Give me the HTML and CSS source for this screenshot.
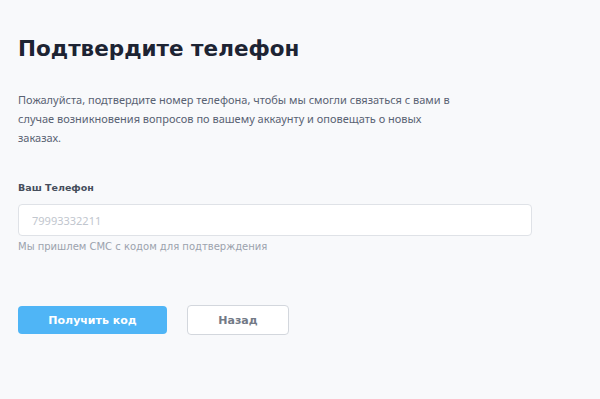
FILE: index.html
```html
<!DOCTYPE html>
<html lang="ru">
<head>
<meta charset="utf-8">
<link rel="stylesheet" href="styles.css">
</head>
<body>
<main class="page">
  <h1 class="title">Подтвердите телефон</h1>
  <p class="lead">Пожалуйста, подтвердите номер телефона, чтобы мы смогли связаться с вами в случае возникновения вопросов по вашему аккаунту и оповещать о новых заказах.</p>
  <div class="field">
    <label class="label" for="phone">Ваш Телефон</label>
    <input class="input" id="phone" type="text" placeholder="79993332211">
    <div class="hint">Мы пришлем СМС с кодом для подтверждения</div>
  </div>
  <div class="actions">
    <button class="btn btn-primary">Получить код</button>
    <button class="btn btn-secondary">Назад</button>
  </div>
</main>
</body>
</html>
```
FILE: styles.css
```css
html, body {
  margin: 0;
  padding: 0;
  background: #f8f9fb;
  font-family: "DejaVu Sans", "Noto Sans", sans-serif;
}
.page {
  padding: 34px 18px 0 18px;
  width: 514px;
}
.title {
  margin: 0;
  font-size: 21.5px;
  line-height: 30px;
  font-weight: 700;
  color: #1d2433;
}
.lead {
  margin: 26px 0 0 0;
  font-family: "Noto Sans", sans-serif;
  font-size: 11px;
  line-height: 19px;
  color: #596273;
  width: 440px;
}
.field {
  margin-top: 34px;
  display: flex;
  flex-direction: column;
}
.label {
  font-size: 9.5px;
  font-weight: 700;
  color: #464e5c;
  line-height: 14px;
}
.input {
  margin-top: 9px;
  box-sizing: border-box;
  height: 32px;
  width: 514px;
  border: 1px solid #dfe2e7;
  border-radius: 4px;
  background: #fff;
  padding: 0 13px;
  font-family: "Noto Sans", sans-serif;
  font-size: 11px;
  color: #333;
  outline: none;
}
.input::placeholder {
  color: #c1c6ce;
}
.hint {
  margin-top: 4px;
  font-size: 10px;
  line-height: 14px;
  color: #9ba2ad;
}
.actions {
  margin-top: 51px;
  display: flex;
  align-items: center;
  gap: 20px;
}
.btn {
  font-family: inherit;
  font-weight: 700;
  font-size: 11px;
  border-radius: 4px;
  cursor: pointer;
}
.btn-primary {
  width: 149px;
  height: 28px;
  background: #4fb5f6;
  border: none;
  color: #fff;
}
.btn-secondary {
  width: 102px;
  height: 30px;
  background: #fff;
  border: 1px solid #d3d7dd;
  color: #737a86;
}
```
